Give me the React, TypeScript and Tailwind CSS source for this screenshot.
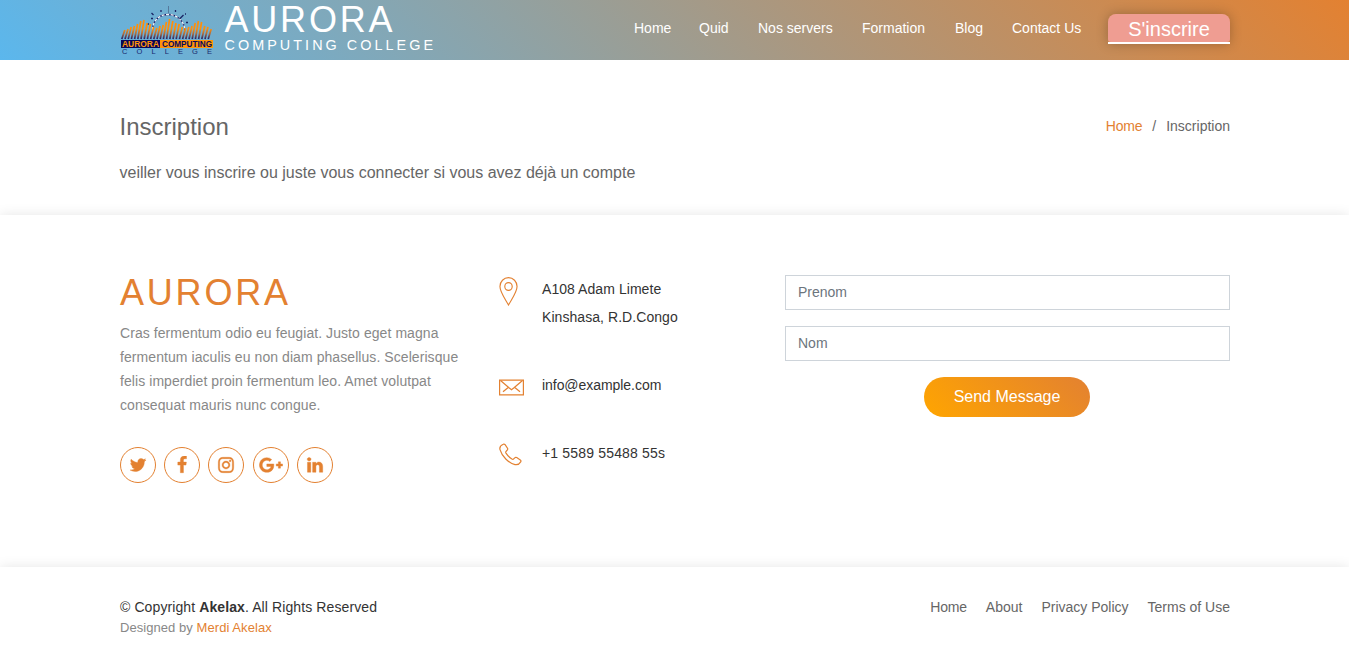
import React from "react";

const nav = [
  { label: "Home", cls: "w-[65px]" },
  { label: "Quid", cls: "w-[59px]" },
  { label: "Nos servers", cls: "w-[104px]" },
  { label: "Formation", cls: "w-[93px]" },
  { label: "Blog", cls: "w-[57px]" },
  { label: "Contact Us", cls: "w-[96px]" },
];

const socials = [
  {
    name: "Twitter",
    box: "0 0 1792 1792",
    size: "w-[18px]",
    d: "M1684 408q-67 98-162 167 1 14 1 42 0 130-38 259.5t-115.5 248.5-184.5 210.5-258 146-323 54.5q-271 0-496-145 35 4 78 4 225 0 401-138-105-2-188-64.5t-114-159.5q33 5 61 5 43 0 85-11-112-23-185.5-111.5t-73.5-205.5v-4q68 38 146 41-66-44-105-115t-39-154q0-88 44-163 121 149 294.5 238.5t371.5 99.5q-8-38-8-74 0-134 94.5-228.5t228.5-94.5q140 0 236 102 109-21 205-78-37 115-142 178 93-10 186-50z",
  },
  {
    name: "Facebook",
    box: "0 0 1792 1792",
    size: "w-[18px]",
    d: "M1343 12v264h-157q-86 0-116 36t-30 108v189h293l-39 296h-254v759h-306v-759h-255v-296h255v-218q0-186 104-288.5t277-102.5q147 0 228 12z",
  },
  {
    name: "Instagram",
    box: "0 0 1792 1792",
    size: "w-[18px]",
    d: "M1152 896q0-106-75-181t-181-75-181 75-75 181 75 181 181 75 181-75 75-181zm138 0q0 164-115 279t-279 115-279-115-115-279 115-279 279-115 279 115 115 279zm108-410q0 38-27 65t-65 27-65-27-27-65 27-65 65-27 65 27 27 65zm-502-220q-7 0-76.5-.5t-105.5 0-96.5 3-103 10-71.5 18.5q-50 20-88 58t-58 88q-11 29-18.5 71.5t-10 103-3 96.5 0 105.5.5 76.5-.5 76.5 0 105.5 3 96.5 10 103 18.5 71.5q20 50 58 88t88 58q29 11 71.5 18.5t103 10 96.5 3 105.5 0 76.5-.5 76.5.5 105.5 0 96.5-3 103-10 71.5-18.5q50-20 88-58t58-88q11-29 18.5-71.5t10-103 3-96.5 0-105.5-.5-76.5.5-76.5 0-105.5-3-96.5-10-103-18.5-71.5q-20-50-58-88t-88-58q-29-11-71.5-18.5t-103-10-96.5-3-105.5 0-76.5.5zm768 630q0 229-5 317-10 208-124 322t-322 124q-88 5-317 5t-317-5q-208-10-322-124t-124-322q-5-88-5-317t5-317q10-208 124-322t322-124q88-5 317-5t317 5q208 10 322 124t124 322q5 88 5 317z",
  },
  {
    name: "Google Plus",
    box: "0 0 2304 1792",
    size: "w-[24px]",
    d: "M1437 913q0 208-87 370.5t-248 254-369 91.5q-149 0-285-58t-234-156-156-234-58-285 58-285 156-234 234-156 285-58q286 0 491 192l-199 191q-117-113-292-113-123 0-227.5 62t-165.5 168.5-61 232.5 61 232.5 165.5 168.5 227.5 62q83 0 152.5-23t114.5-57.5 78.5-78.5 49-83 21.5-74h-416v-252h692q12 63 12 122zm867-122v210h-209v209h-210v-209h-209v-210h209v-209h210v209h209z",
  },
  {
    name: "LinkedIn",
    box: "0 0 1792 1792",
    size: "w-[18px]",
    d: "M477 625v991h-330v-991h330zm21-306q1 73-50.5 122t-135.5 49h-2q-82 0-132-49t-50-122q0-74 51.5-122.5t134.5-48.5 133 48.5 51 122.5zm1166 729v568h-329v-530q0-105-40.5-164.5t-126.5-59.5q-63 0-105.5 34.5t-63.5 85.5q-11 30-11 81v553h-329q2-399 2-647t-1-296l-1-48h329v144h-2q20-32 41-56t56.5-52 87-43.5 114.5-15.5q171 0 275 113.5t104 332.5z",
  },
];

const flameHeights = [9, 10, 12, 13, 15, 18, 19, 16, 15, 12, 11, 13, 14, 17, 20, 18, 16, 15, 12, 11, 12, 13, 16, 18, 17, 13, 12, 10];

function Logo() {
  return (
    <svg className="block h-[54px] w-[96px] overflow-visible" viewBox="0 0 96 54">
      <defs>
        <linearGradient id="flame" gradientUnits="userSpaceOnUse" x1="0" y1="14" x2="0" y2="34">
          <stop offset="0.5" stopColor="#ff8f0a" />
          <stop offset="0.75" stopColor="#a8693f" />
          <stop offset="1" stopColor="#22226a" />
        </linearGradient>
      </defs>
      <path d="M32.500 25C32.500 16 39 9.500 48 9.500S64 16 65 25" fill="none" stroke="#171a62" strokeWidth="1.300" />
      <path d="M32.500 25C32.500 16 39 9.500 48 9.500S64 16 65 25" fill="none" stroke="#f0f4f8" strokeWidth="1.300" strokeDasharray="3 1.500" />
      <path d="M48.500 1v7" stroke="#55799c" strokeWidth="1" />
      <path d="M41 5v2M55.500 5v2M31.500 8l2 2M63.500 10l-4 4M27 19h2M31 13.500h2M68 17.500h-2M65 9h1" stroke="#1a2464" strokeWidth="1.300" fill="none" />
      <path
        d={flameHeights.map((h, i) => `M${1.8 + i * 3.2} 34L${4.8 + i * 3.2} ${34 - h}`).join("")}
        fill="none"
        stroke="url(#flame)"
        strokeWidth="1.700"
      />
      <rect x="1" y="35" width="39" height="8" fill="#08085a" />
      <rect x="40" y="35" width="53" height="8" fill="#ff9409" />
      <text x="2" y="42.300" textLength="37" lengthAdjust="spacingAndGlyphs" fontSize="9" fontWeight="700" fontFamily="Liberation Sans, sans-serif" fill="#ff9409">AURORA</text>
      <text x="42" y="42.300" textLength="50" lengthAdjust="spacingAndGlyphs" fontSize="9" fontWeight="700" fontFamily="Liberation Sans, sans-serif" fill="#08085a">COMPUTING</text>
      <text x="2" y="49" textLength="90" lengthAdjust="spacing" fontSize="7.500" fontFamily="Liberation Sans, sans-serif" fill="#18286e">COLLEGE</text>
    </svg>
  );
}

function PinIcon() {
  return (
    <svg className="block h-[29px] w-[19px]" viewBox="0 0 20 29" preserveAspectRatio="none" fill="none" stroke="#e38131" strokeWidth="1.200">
      <path d="M10 28C6.500 22 1 15 1 9.500a9 8.800 0 0 1 18 0C19 15 13.500 22 10 28Z" />
      <circle cx="10" cy="9.500" r="3.900" />
    </svg>
  );
}

function MailIcon() {
  return (
    <svg className="block h-[17px] w-[25px]" viewBox="0 0 25 17" fill="none" stroke="#e38131" strokeWidth="1.200">
      <path d="M.6 1.100h23.800v14.800H.6z" />
      <path d="M1.500 1.500l8.500 7.200 2.500 2 2.500-2 8.500-7.200M4 12.800l5.500-4.600M21 12.800l-5.500-4.600" />
    </svg>
  );
}

function PhoneIcon() {
  return (
    <svg className="block h-[24px] w-[24px]" viewBox="0 0 24 24" fill="none" stroke="#e38131" strokeWidth="1.200">
      <path d="M4.200 1.200c.8-.4 1.300-.3 1.900.5l2.400 3.500c.5.900.3 1.500-.4 2.100l-.9.9c-.7.600-.6 1.200-.2 1.900 1.500 2.400 3.500 4.500 5.900 6 .7.400 1.300.4 1.800-.2l1-1c.6-.7 1.200-.8 2-.3l3.600 2.300c.8.600.9 1.200.4 2-1.200 2-3.200 3.200-5.700 2.700C9.500 19.900 2.900 13.300 1 6.600.4 4.300 2 2.200 4.200 1.200Z" />
    </svg>
  );
}

export default function App() {
  return (
    <div className="flex min-h-[654px] flex-col overflow-hidden bg-white font-['Liberation_Sans',Arial,sans-serif] text-[#666666]">
      <header className="h-[60px] shrink-0 bg-[linear-gradient(45deg,#5bb7ed,#e38131)]">
        <div className="ml-[120px] flex h-full w-[1110px] items-start justify-between text-white">
          <div className="flex">
            <div className="w-[104.5px] pt-[5px]">
              <Logo />
            </div>
            <div>
              <h1 className="text-[36px] leading-[39px] tracking-[2.8px]">AURORA</h1>
              <div className="-mt-[3px] text-[14.4px] leading-[18px] tracking-[3.04px]">COMPUTING COLLEGE</div>
            </div>
          </div>
          <nav className="flex text-[14px] leading-[20px]">
            <ul className="flex pt-[18px]">
              {nav.map((item) => (
                <li key={item.label} className={item.cls}>{item.label}</li>
              ))}
            </ul>
            <div className="mt-[14px] h-[30px] w-[122px] rounded-t-[8px] shadow-[0_0_12px_rgba(0,0,0,0.25)]">
              <div className="h-[28px] rounded-t-[8px] rounded-b-[3px] bg-[#ef9d92] text-center text-[20px] leading-[30px]">S'inscrire</div>
              <div className="h-[2px] bg-white" />
            </div>
          </nav>
        </div>
      </header>

      <main className="h-[155px] shrink-0">
        <div className="ml-[119.5px] w-[1110.5px] pt-[52px]">
          <div className="flex items-center justify-between">
            <h2 className="text-[24px] leading-[29px]">Inscription</h2>
            <div className="flex gap-[10px] text-[14px] leading-[21px]">
              <span className="tracking-[-0.2px] text-[#e38131]">Home</span>
              <span>/</span>
              <span>Inscription</span>
            </div>
          </div>
          <p className="mt-[20px] text-[16px] leading-[24px]">veiller vous inscrire ou juste vous connecter si vous avez déjà un compte</p>
        </div>
      </main>

      <section className="h-[352px] shrink-0 bg-white shadow-[0_0_12px_rgba(0,0,0,0.1)]">
        <div className="ml-[120px] flex w-[1110px] items-start pt-[60px] text-[14px]">
          <div className="w-[379px]">
            <h3 className="h-[46px] text-[36px] leading-[36px] tracking-[2.8px] text-[#e38131]">AURORA</h3>
            <p className="w-[350px] leading-[24px] tracking-[0.07px] text-[#888888]">
              Cras fermentum odio eu feugiat. Justo eget magna<br />fermentum iaculis eu non diam phasellus. Scelerisque<br />felis imperdiet proin fermentum leo. Amet volutpat<br />consequat mauris nunc congue.
            </p>
            <div className="mt-[30px] flex gap-[8.2px]">
              {socials.map((s) => (
                <a key={s.name} aria-label={s.name} className="flex h-[36px] w-[36px] items-center justify-center rounded-full border border-[#e38131]">
                  <svg className={`${s.size} h-[18px] shrink-0`} viewBox={s.box} fill="#e38131" stroke="#e38131" strokeWidth="40">
                    <path d={s.d} />
                  </svg>
                </a>
              ))}
            </div>
          </div>
          <div className="w-[286px] text-[#333333]">
            <div className="flex h-[96px]">
              <div className="w-[43px] pt-[2px]"><PinIcon /></div>
              <p className="leading-[28px] tracking-[0.06px]">A108 Adam Limete<br />Kinshasa, R.D.Congo</p>
            </div>
            <div className="flex h-[68px]">
              <div className="w-[43px] pt-[8px]"><MailIcon /></div>
              <p className="leading-[28px] tracking-[-0.05px]">info@example.com</p>
            </div>
            <div className="flex">
              <div className="w-[43px] pt-[4px]"><PhoneIcon /></div>
              <p className="leading-[28px] tracking-[0.17px]">+1 5589 55488 55s</p>
            </div>
          </div>
          <form className="flex w-[445px] flex-col items-center gap-4">
            <input className="h-[35px] w-full border border-[#ced4da] px-3 pb-[2px] placeholder:text-[#6c757d]" placeholder="Prenom" />
            <input className="h-[35px] w-full border border-[#ced4da] px-3 pb-[2px] placeholder:text-[#6c757d]" placeholder="Nom" />
            <button type="button" className="mr-px h-[40px] w-[166px] rounded-[20px] bg-[linear-gradient(45deg,orange,#e38131)] text-[16px] text-white">Send Message</button>
          </form>
        </div>
      </section>

      <footer className="h-[87px] shrink-0 bg-white shadow-[0_0_12px_rgba(0,0,0,0.1)]">
        <div className="ml-[120px] flex w-[1110px] justify-between pt-[30px] text-[14px] leading-[21px]">
          <div>
            <div className="tracking-[0.1px] text-[#333333]">© Copyright <strong>Akelax</strong>. All Rights Reserved</div>
            <div className="text-[13px] leading-[20px] tracking-[0.06px] text-[#888888]">Designed by <span className="text-[#e38131]">Merdi Akelax</span></div>
          </div>
          <div className="flex gap-[19px]">
            <span className="tracking-[-0.2px]">Home</span>
            <span>About</span>
            <span>Privacy Policy</span>
            <span>Terms of Use</span>
          </div>
        </div>
      </footer>
    </div>
  );
}
